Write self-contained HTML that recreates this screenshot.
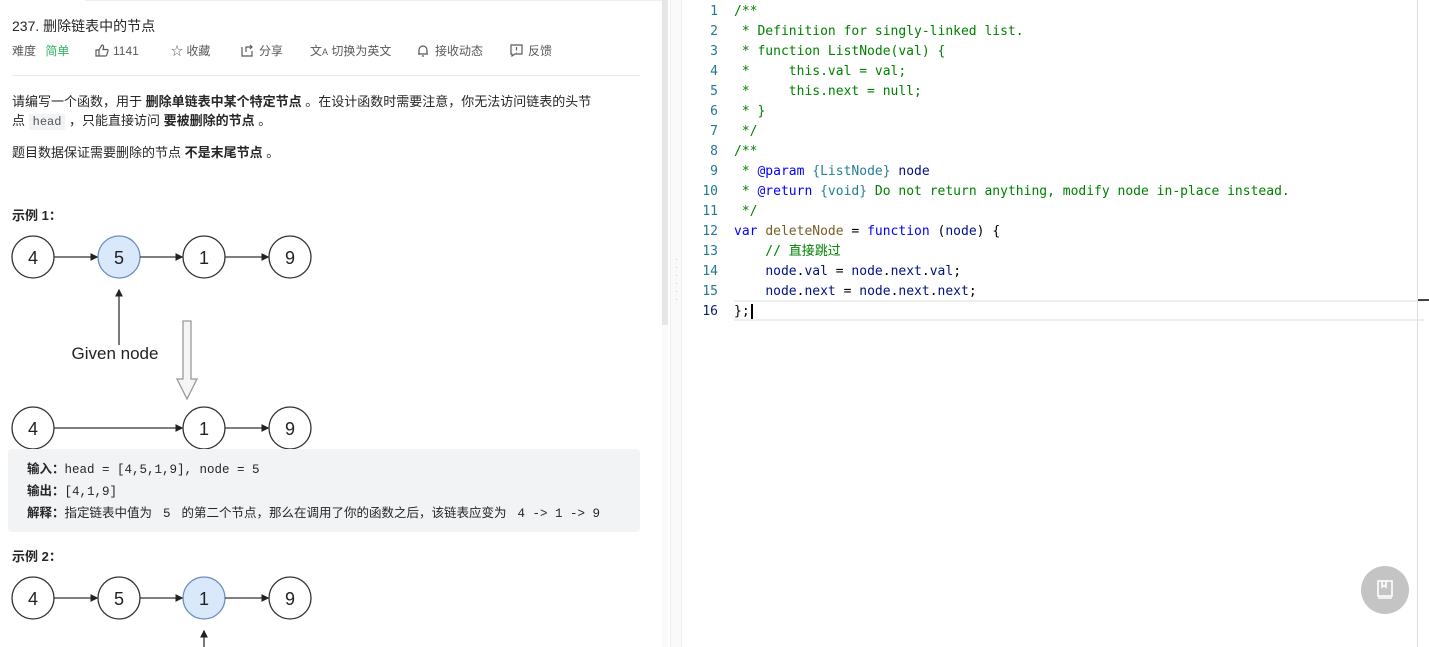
<!DOCTYPE html>
<html><head><meta charset="utf-8"><style>
*{margin:0;padding:0;box-sizing:border-box}
body{width:1429px;height:647px;overflow:hidden;background:#fff;font-family:"Liberation Sans","Noto Sans CJK SC",sans-serif;color:#262626;position:relative}
.a{position:absolute;white-space:nowrap}
.t{font-size:13px;color:#262626}
.m{font-family:"Liberation Mono","Noto Sans CJK SC",monospace}
.tb{font-size:12px;color:#595959;line-height:16px}
.code{position:absolute;left:682px;top:0;width:740px}
.ln{position:absolute;left:0;width:36px;text-align:right;font-family:"DejaVu Sans Mono",monospace;font-size:13px;line-height:16px;color:#237893;margin-top:1px}
.cl{position:absolute;left:52px;font-family:"DejaVu Sans Mono","Noto Sans CJK SC",monospace;font-size:13px;line-height:16px;height:16px;white-space:pre;color:#000;margin-top:1px}
.c{color:#008000}.k{color:#0000ff}.f{color:#795e26}.v{color:#001080}.ty{color:#267f99}.d{color:#0000ff}
</style></head><body>
<div class="a" style="left:85px;top:0;width:583px;height:1px;background:#eee"></div>
<div class="a" style="left:12px;top:16px;font-size:14px;color:#262626">237. 删除链表中的节点</div>
<div class="a tb" style="left:12px;top:43px">难度 <span style="color:#2db55d;margin-left:6px">简单</span></div>
<div class="a tb" style="left:95px;top:43px"><svg width="14" height="13" viewBox="0 0 14 13" style="vertical-align:-2px;margin-right:4px" fill="none" stroke="#595959" stroke-width="1.2"><path d="M1 6h3v6H1zM4 6l3-5c1 0 2 1 1.5 2.5L8 5.5h4c.8 0 1.2.7 1 1.4l-1.3 4.3c-.2.5-.6.8-1.1.8H4"/></svg>1141</div>
<div class="a tb" style="left:171px;top:43px">☆ 收藏</div>
<div class="a tb" style="left:241px;top:43px"><svg width="13" height="13" viewBox="0 0 13 13" style="vertical-align:-2px;margin-right:5px" fill="none" stroke="#595959" stroke-width="1.2"><path d="M1 3v9h10V7M5 8V3h6M9 1l2 2-2 2"/></svg>分享</div>
<div class="a tb" style="left:310px;top:43px">文<span style="font-size:9px">A</span> 切换为英文</div>
<div class="a tb" style="left:417px;top:43px"><svg width="12" height="13" viewBox="0 0 12 13" style="vertical-align:-2px;margin-right:6px" fill="none" stroke="#595959" stroke-width="1.2"><path d="M2 10V6a4 4 0 018 0v4H1h10M5 12h2"/></svg>接收动态</div>
<div class="a tb" style="left:510px;top:43px"><svg width="13" height="13" viewBox="0 0 13 13" style="vertical-align:-2px;margin-right:5px" fill="none" stroke="#595959" stroke-width="1.2"><path d="M1 1h11v9H5l-3 2v-2H1zM6.5 3v3.5M6.5 8v.5"/></svg>反馈</div>
<div class="a" style="left:12px;top:75px;width:628px;height:1px;background:#e8e8e8"></div>
<div class="a t" style="left:12px;top:91px">请编写一个函数，用于 <b>删除单链表中某个特定节点</b> 。在设计函数时需要注意，你无法访问链表的头节</div>
<div class="a t" style="left:12px;top:110px">点 <span class="m" style="background:#f2f3f5;padding:1px 4px;font-size:12px;color:#555">head</span> ，只能直接访问 <b>要被删除的节点</b> 。</div>
<div class="a t" style="left:12px;top:142px">题目数据保证需要删除的节点 <b>不是末尾节点</b> 。</div>
<div class="a t" style="left:12px;top:205px"><b style="font-weight:600">示例 1：</b></div>
<svg class="a" style="left:0;top:225px" width="330" height="230" font-family="Liberation Sans" font-size="18" text-anchor="middle">
<defs><marker id="ar" markerWidth="6" markerHeight="6" refX="5" refY="3" orient="auto"><path d="M0,0L6,3L0,6z" fill="#222"/></marker></defs>
<g stroke="#333" stroke-width="1.3" fill="#fff">
<circle cx="33" cy="32" r="21"/><circle cx="119" cy="32" r="21" fill="#dae8fc" stroke="#6c8ebf"/><circle cx="204" cy="32" r="21"/><circle cx="290" cy="32" r="21"/>
<circle cx="33" cy="203" r="21"/><circle cx="204" cy="203" r="21"/><circle cx="290" cy="203" r="21"/>
<line x1="54" y1="32" x2="97" y2="32" marker-end="url(#ar)"/><line x1="140" y1="32" x2="182" y2="32" marker-end="url(#ar)"/><line x1="225" y1="32" x2="268" y2="32" marker-end="url(#ar)"/>
<line x1="119" y1="120" x2="119" y2="65" marker-end="url(#ar)"/>
<line x1="54" y1="203" x2="182" y2="203" marker-end="url(#ar)"/><line x1="225" y1="203" x2="268" y2="203" marker-end="url(#ar)"/>
<path d="M183,96h8v58h6l-10,20l-10,-20h6z" fill="#f5f5f5" stroke="#999"/>
</g>
<g fill="#222" stroke="none"><text x="33" y="39">4</text><text x="119" y="39">5</text><text x="204" y="39">1</text><text x="290" y="39">9</text>
<text x="33" y="210">4</text><text x="204" y="210">1</text><text x="290" y="210">9</text>
<text x="115" y="134" font-size="17">Given node</text></g>
</svg>
<div class="a" style="left:8px;top:449px;width:632px;height:83px;background:#f2f3f5;border-radius:4px"></div>
<div class="a t m" style="left:27px;top:459px;font-size:12.5px;line-height:21px;white-space:pre"><b style="font-family:'Liberation Sans','Noto Sans CJK SC'">输入：</b>head = [4,5,1,9], node = 5
<b style="font-family:'Liberation Sans','Noto Sans CJK SC'">输出：</b>[4,1,9]
<b style="font-family:'Liberation Sans','Noto Sans CJK SC'">解释：</b><span style="font-family:'Liberation Sans','Noto Sans CJK SC'">指定链表中值为 </span> 5 <span style="font-family:'Liberation Sans','Noto Sans CJK SC'"> 的第二个节点，那么在调用了你的函数之后，该链表应变为 </span> 4 -&gt; 1 -&gt; 9</div>
<div class="a t" style="left:12px;top:546px"><b style="font-weight:600">示例 2：</b></div>
<svg class="a" style="left:0;top:570px" width="330" height="77" font-family="Liberation Sans" font-size="18" text-anchor="middle">
<g stroke="#333" stroke-width="1.3" fill="#fff">
<circle cx="33" cy="28" r="21"/><circle cx="119" cy="28" r="21"/><circle cx="204" cy="28" r="21" fill="#dae8fc" stroke="#6c8ebf"/><circle cx="290" cy="28" r="21"/>
<line x1="54" y1="28" x2="97" y2="28" marker-end="url(#ar)"/><line x1="140" y1="28" x2="182" y2="28" marker-end="url(#ar)"/><line x1="225" y1="28" x2="268" y2="28" marker-end="url(#ar)"/>
<line x1="204" y1="80" x2="204" y2="61" marker-end="url(#ar)"/></g>
<g fill="#222"><text x="33" y="35">4</text><text x="119" y="35">5</text><text x="204" y="35">1</text><text x="290" y="35">9</text></g>
</svg>
<div class="a" style="left:662px;top:0;width:6px;height:325px;background:#e6e6e6"></div>
<div class="a" style="left:662px;top:325px;width:6px;height:322px;background:#fafafa"></div>
<div class="a" style="left:670px;top:0;width:12px;height:647px;background:#fafafa;border-left:1px solid #eee;border-right:1px solid #eee"></div>
<div class="a" style="left:675px;top:255px;color:#bbb;font-size:9px;line-height:8px;width:3px">·<br>·<br>·<br>·<br>·<br>·</div>
<div class="code">
<div class="a" style="left:52px;top:300px;width:690px;height:21px;border-top:2px solid #eee;border-bottom:2px solid #eee"></div>
<div class="ln" style="top:3px">1</div><div class="cl c" style="top:3px">/**</div>
<div class="ln" style="top:23px">2</div><div class="cl c" style="top:23px"> * Definition for singly-linked list.</div>
<div class="ln" style="top:43px">3</div><div class="cl c" style="top:43px"> * function ListNode(val) {</div>
<div class="ln" style="top:63px">4</div><div class="cl c" style="top:63px"> *     this.val = val;</div>
<div class="ln" style="top:83px">5</div><div class="cl c" style="top:83px"> *     this.next = null;</div>
<div class="ln" style="top:103px">6</div><div class="cl c" style="top:103px"> * }</div>
<div class="ln" style="top:123px">7</div><div class="cl c" style="top:123px"> */</div>
<div class="ln" style="top:143px">8</div><div class="cl c" style="top:143px">/**</div>
<div class="ln" style="top:163px">9</div><div class="cl c" style="top:163px"> * <span class="d">@param</span> <span class="ty">{ListNode}</span> <span class="v">node</span></div>
<div class="ln" style="top:183px">10</div><div class="cl c" style="top:183px"> * <span class="d">@return</span> <span class="ty">{void}</span> Do not return anything, modify node in-place instead.</div>
<div class="ln" style="top:203px">11</div><div class="cl c" style="top:203px"> */</div>
<div class="ln" style="top:223px">12</div><div class="cl" style="top:223px"><span class="k">var</span> <span class="f">deleteNode</span> = <span class="k">function</span> (<span class="v">node</span>) {</div>
<div class="ln" style="top:243px">13</div><div class="cl c" style="top:243px">    // 直接跳过</div>
<div class="ln" style="top:263px">14</div><div class="cl" style="top:263px">    <span class="v">node</span>.<span class="v">val</span> = <span class="v">node</span>.<span class="v">next</span>.<span class="v">val</span>;</div>
<div class="ln" style="top:283px">15</div><div class="cl" style="top:283px">    <span class="v">node</span>.<span class="v">next</span> = <span class="v">node</span>.<span class="v">next</span>.<span class="v">next</span>;</div>
<div class="ln" style="top:303px;color:#0b216f">16</div><div class="cl" style="top:303px">};<span style="border-left:2px solid #000;margin-left:1px"> </span></div>
</div>
<div class="a" style="left:1417px;top:0;width:1px;height:647px;background:#ddd"></div>
<div class="a" style="left:1418px;top:299px;width:11px;height:2px;background:#444"></div>
<div class="a" style="left:1361px;top:566px;width:48px;height:48px;border-radius:50%;background:#c4c4c4"></div>
<svg class="a" style="left:1375px;top:580px" width="20" height="20" fill="none" stroke="#fff" stroke-width="1.6"><rect x="3" y="1" width="14" height="15"/><path d="M3 18h14M7 1v6l2-1.5 2 1.5V1"/></svg>
</body></html>
